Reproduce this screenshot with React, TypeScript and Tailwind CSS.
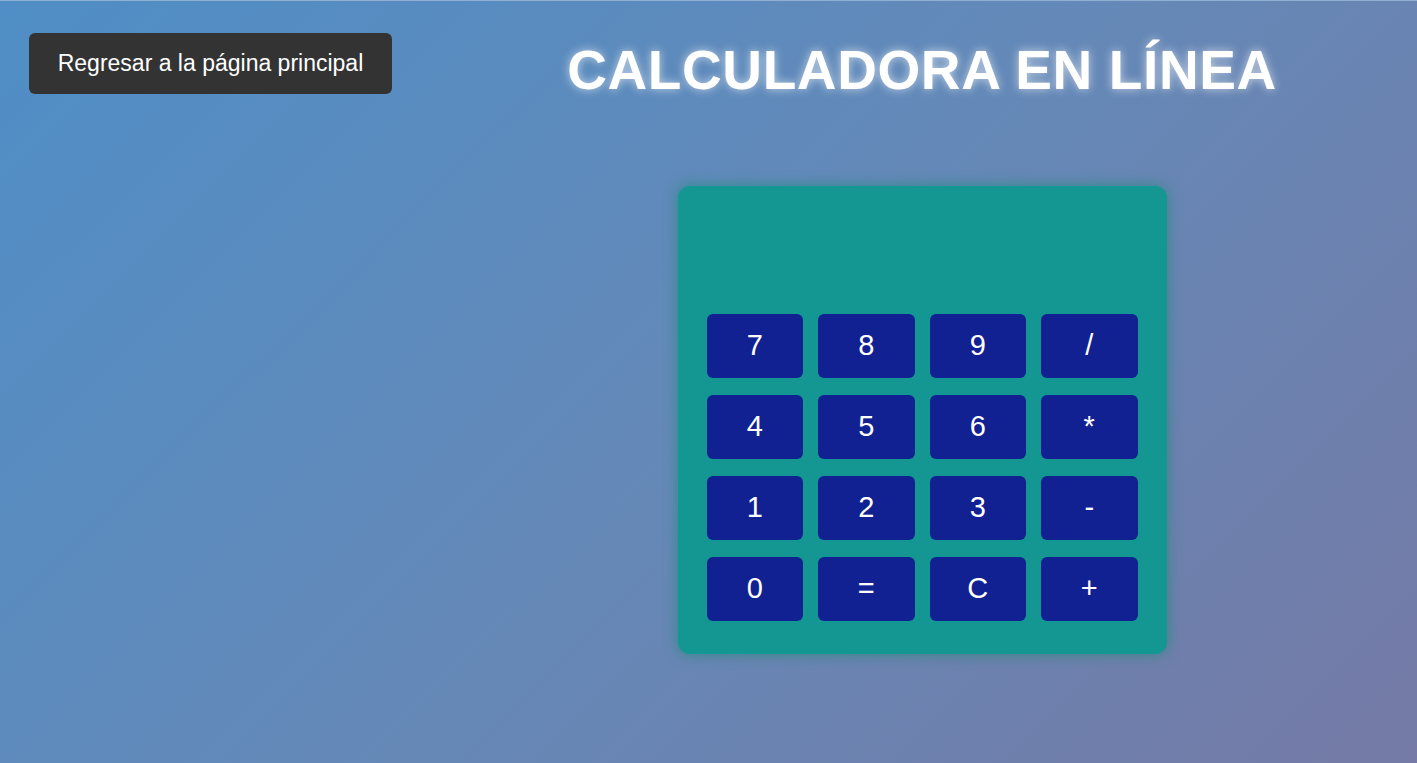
import React, { useState } from "react"

const keys = ["7", "8", "9", "/", "4", "5", "6", "*", "1", "2", "3", "-", "0", "=", "C", "+"]

export default function App() {
  const [display, setDisplay] = useState("")

  const press = (k: string) => {
    if (k === "C") return setDisplay("")
    if (k === "=") {
      try {
        // eslint-disable-next-line no-new-func
        const r = Function(`"use strict";return (${display || "0"})`)()
        setDisplay(String(r))
      } catch {
        setDisplay("Error")
      }
      return
    }
    setDisplay((d) => d + k)
  }

  return (
    <div className="min-h-screen w-full border-t border-[#8fb0d3] bg-[linear-gradient(135deg,#4f8ec6_0%,#6489b8_50%,#757aa6_100%)] flex items-start pt-[32px] pl-[29px] font-['Liberation_Sans',Arial,sans-serif]">
      <button className="w-[363px] h-[61px] shrink-0 rounded-md bg-[#333333] text-white text-[23px] flex items-center justify-center">
        Regresar a la página principal
      </button>

      <main className="flex-1 flex flex-col items-center ml-[35px]">
        <h1 className="mt-[4px] text-white font-bold text-[55px] leading-[1.22] tracking-[0.6px] [text-shadow:0_0_10px_rgba(255,255,255,0.65)]">
          CALCULADORA EN LÍNEA
        </h1>

        <div className="mt-[82px] w-[489px] rounded-xl bg-[#149792] px-[29px] pt-[29px] pb-[33px] shadow-[0_0_14px_rgba(30,140,120,0.8)]">
          <div className="h-[80px] mb-[19px] flex items-center justify-end text-white text-[36px] overflow-hidden">
            {display}
          </div>
          <div className="grid grid-cols-4 gap-x-[15px] gap-y-[17px]">
            {keys.map((k) => (
              <button
                key={k}
                onClick={() => press(k)}
                className="h-[64px] rounded-md bg-[#112192] text-white text-[29px] flex items-center justify-center"
              >
                {k}
              </button>
            ))}
          </div>
        </div>
      </main>
    </div>
  )
}
